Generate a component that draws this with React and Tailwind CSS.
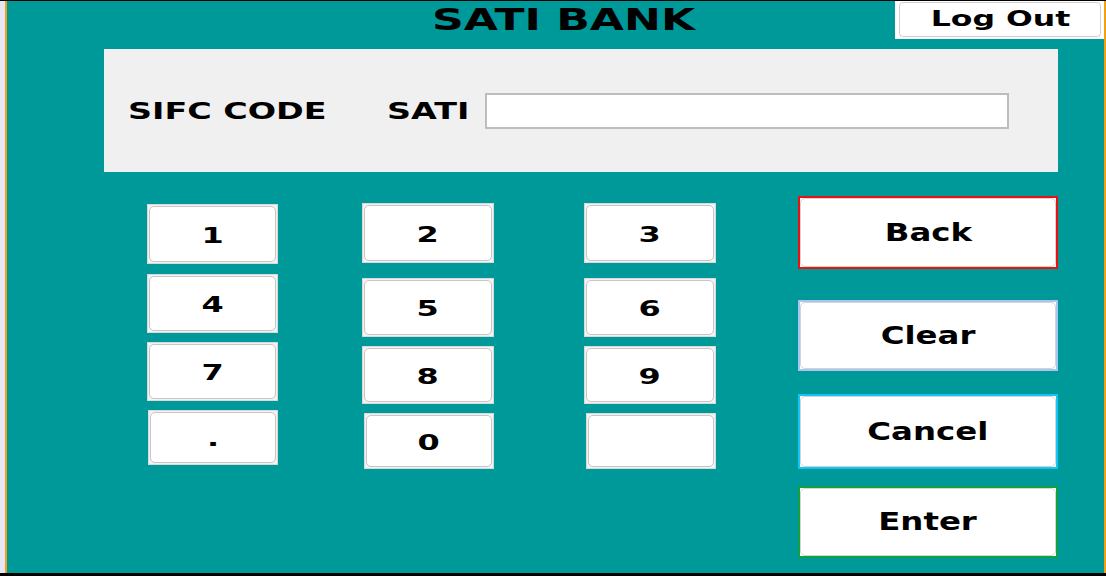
import React from 'react';

const font = "font-['DejaVu_Sans','Verdana',sans-serif] font-bold text-black";

const columns = [
  {
    ml: 'ml-[140px]',
    w: 'w-[131px]',
    keys: [
      { label: '1', cls: 'mt-[32px] h-[60px]' },
      { label: '4', cls: 'mt-[10px] h-[59px]' },
      { label: '7', cls: 'mt-[9px] h-[59px]' },
      { label: '.', cls: 'mt-[9px] h-[55px] ml-px w-[130px]' },
    ],
  },
  {
    ml: 'ml-[84px]',
    w: 'w-[132px]',
    keys: [
      { label: '2', cls: 'mt-[31px] h-[60px]' },
      { label: '5', cls: 'mt-[15px] h-[59px]' },
      { label: '8', cls: 'mt-[9px] h-[58px]' },
      { label: '0', cls: 'mt-[9px] h-[56px] ml-[2px] w-[130px]' },
    ],
  },
  {
    ml: 'ml-[90px]',
    w: 'w-[132px]',
    keys: [
      { label: '3', cls: 'mt-[31px] h-[60px]' },
      { label: '6', cls: 'mt-[15px] h-[59px]' },
      { label: '9', cls: 'mt-[9px] h-[58px]' },
      { label: '', cls: 'mt-[9px] h-[56px] ml-[2px] w-[130px]' },
    ],
  },
];

const actions = [
  { label: 'Back', cls: 'mt-[24px] h-[73px] border-[#e81212]' },
  { label: 'Clear', cls: 'mt-[31px] h-[71px] border-[#a9c6ee]' },
  { label: 'Cancel', cls: 'mt-[23px] h-[75px] border-[#14c4f4]' },
  { label: 'Enter', cls: 'mt-[17px] h-[72px] border-[#12a044]' },
];

const KeyButton = ({ label, cls }) => (
  <div className={`${cls} flex-none border border-[#dadada] bg-[#f2f2f2] p-px`}>
    <div className="flex h-full items-center justify-center rounded-[5px] border border-[#c6c6c6] bg-white pt-[3px]">
      <span className={`${font} inline-block scale-x-[1.45] text-[22px] leading-none`}>{label}</span>
    </div>
  </div>
);

const ActionButton = ({ label, cls }) => (
  <div className={`${cls} flex-none border-2 bg-white`}>
    <div className="flex h-full items-center justify-center rounded-[5px] border border-[#d4d4d4] bg-white">
      <span className={`${font} inline-block scale-x-[1.35] text-[24px] leading-none`}>{label}</span>
    </div>
  </div>
);

export default function App() {
  return (
    <div className="flex h-[576px] w-[1106px] border-t border-b-[3px] border-black bg-[#e6e6f6] pl-[5px]">
      <div className="flex flex-1 flex-col border-l-2 border-r-2 border-[#f0a010] bg-[#009999]">
        {/* header */}
        <div className="flex h-[48px] flex-none">
          <div className="w-[209px] flex-none" />
          <div className="flex flex-1 justify-center pl-[16px] pt-[4px]">
            <span className={`${font} inline-block scale-x-[1.47] text-[30px] leading-none`}>SATI BANK</span>
          </div>
          <div className="h-[38px] w-[209px] flex-none bg-white pl-[4px] pt-px">
            <button className="flex h-[35px] w-[202px] items-center justify-center rounded-[4px] border border-[#d0d0d0] bg-white">
              <span className={`${font} inline-block scale-x-[1.5] text-[21px] leading-none`}>Log Out</span>
            </button>
          </div>
        </div>

        {/* code panel */}
        <div className="ml-[97px] flex h-[123px] w-[954px] flex-none items-center bg-[#f0f0f0] pl-[24px]">
          <div className="w-[259px] flex-none pt-[3px]">
            <span className={`${font} inline-block origin-left scale-x-[1.45] whitespace-nowrap text-[23px] leading-none`}>
              SIFC CODE
            </span>
          </div>
          <div className="w-[98px] flex-none pt-[3px]">
            <span className={`${font} inline-block origin-left scale-x-[1.45] text-[23px] leading-none`}>SATI</span>
          </div>
          <input
            type="text"
            className="h-[36px] w-[524px] flex-none border-2 border-[#bdbdbd] bg-white outline-none"
          />
        </div>

        {/* keypad */}
        <div className="flex flex-1">
          {columns.map((col, i) => (
            <div key={i} className={`${col.ml} ${col.w} flex flex-none flex-col`}>
              {col.keys.map((k, j) => (
                <KeyButton key={j} label={k.label} cls={k.cls} />
              ))}
            </div>
          ))}
          <div className="ml-[82px] flex w-[260px] flex-none flex-col">
            {actions.map((a) => (
              <ActionButton key={a.label} label={a.label} cls={a.cls} />
            ))}
          </div>
        </div>
      </div>
    </div>
  );
}
